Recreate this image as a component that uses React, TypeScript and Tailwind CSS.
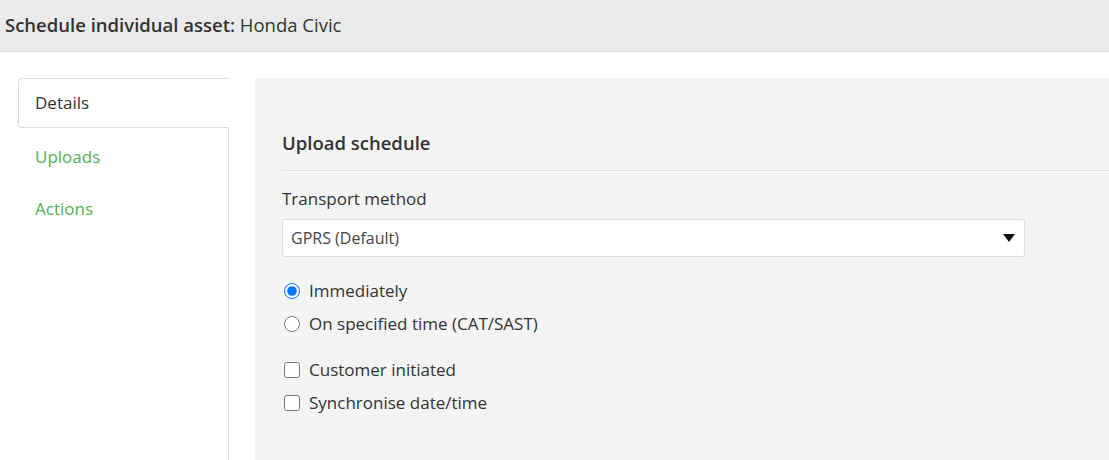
import React from "react";

const font = { fontFamily: '"Open Sans", "Noto Sans", sans-serif' };

export default function App() {
	return (
		<div className="min-h-screen w-full bg-white text-[#333] overflow-hidden" style={font}>
			<div className="h-[52px] bg-[#ebebeb] border-b border-[#d9d9d9] flex items-center px-[5px]">
				<h1 className="text-[18.5px] text-[#333] leading-none">
					<span className="font-semibold">Schedule individual asset:</span> Honda Civic
				</h1>
			</div>

			<div className="flex pt-[26px] pl-[18px] gap-[26px]">
				<ul className="w-[211px] shrink-0 border-r border-[#dddddd] min-h-[360px] text-[17px]">
					<li className="h-[50px] -mr-px bg-white border border-r-0 border-[#dddddd] rounded-l-[4px] flex items-center pl-[16px] text-[#333]">
						Details
					</li>
					<li className="h-[56px] flex items-center pl-[17px] pt-[2px] text-[#55b055]">Uploads</li>
					<li className="h-[50px] flex items-center pl-[17px] text-[#55b055]">Actions</li>
				</ul>

				<div className="flex-1 bg-[#f4f4f4] rounded-tl-[4px] pl-[27px] pt-[52px] min-h-[400px]">
					<h2 className="text-[18.5px] font-semibold leading-[26px] pb-[14px] border-b border-[#dddddd] shadow-[0_1px_0_#ffffff]">
						Upload schedule
					</h2>

					<label className="block text-[17px] mt-[17px] leading-[22px]">Transport method</label>
					<div className="mt-[9px] w-[743px] h-[38px] bg-white border border-[#dddddd] rounded-[3px] flex items-center justify-between pl-[8px] pr-[9px] text-[16px] text-[#444]">
						<span>GPRS (Default)</span>
						<svg width="12" height="8" viewBox="0 0 12 8">
							<path d="M0 0 L12 0 L6 8 Z" fill="#111" />
						</svg>
					</div>

					<div className="mt-[23px] flex flex-col gap-[11px] text-[17px]">
						<label className="flex items-center gap-[9px] h-[22px]">
							<input type="radio" name="when" defaultChecked className="w-4 h-4 m-0 ml-[2px] accent-[#0075ff]" />
							<span>Immediately</span>
						</label>
						<label className="flex items-center gap-[9px] h-[22px]">
							<input type="radio" name="when" className="w-4 h-4 m-0 ml-[2px]" />
							<span>On specified time (CAT/SAST)</span>
						</label>
					</div>

					<div className="mt-[24px] flex flex-col gap-[11px] text-[17px]">
						<label className="flex items-center gap-[9px] h-[22px]">
							<input type="checkbox" className="w-4 h-4 m-0 ml-[2px]" />
							<span>Customer initiated</span>
						</label>
						<label className="flex items-center gap-[9px] h-[22px]">
							<input type="checkbox" className="w-4 h-4 m-0 ml-[2px]" />
							<span>Synchronise date/time</span>
						</label>
					</div>
				</div>
			</div>
		</div>
	);
}
